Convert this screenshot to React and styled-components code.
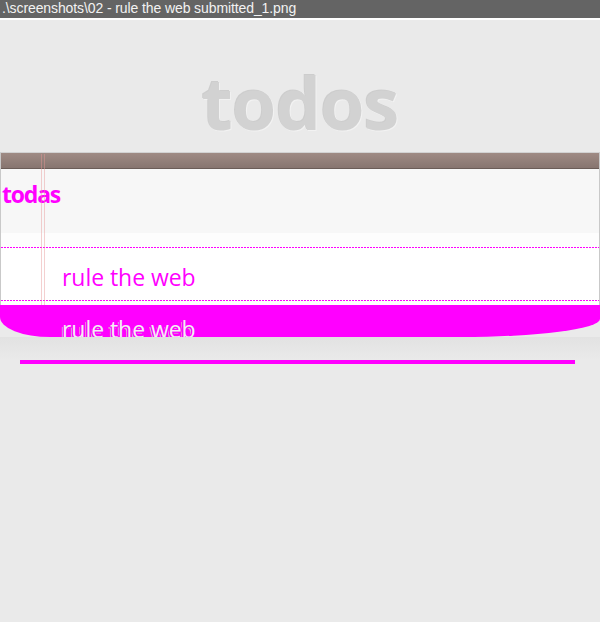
import React from "react";
import styled, { createGlobalStyle } from "styled-components";

const Global = createGlobalStyle`
  html, body { margin: 0; padding: 0; }
  body {
    background: #eaeaea;
    width: 600px;
    height: 622px;
    overflow: hidden;
    font-family: "Open Sans", "Liberation Sans", sans-serif;
  }
`;

const Page = styled.div`
  width: 600px;
  height: 622px;
  display: flex;
  flex-direction: column;
  background: #eaeaea;
`;

const TitleBar = styled.div`
  height: 18px;
  background: #646464;
  color: #f2f2f2;
  font-family: "Liberation Sans", Arial, sans-serif;
  font-size: 14px;
  line-height: 17px;
  letter-spacing: -0.1px;
  padding-left: 2px;
  border-bottom: 2px solid #ffffff;
  white-space: nowrap;
`;

const Header = styled.header`
  height: 132px;
  box-sizing: border-box;
  padding-top: 46px;
  display: flex;
  justify-content: center;
`;

const Logo = styled.h1`
  margin: 0;
  font-family: "Open Sans", "DejaVu Sans", sans-serif;
  font-weight: 700;
  font-size: 72px;
  line-height: 72px;
  height: 72px;
  letter-spacing: -1px;
  color: #d2d2d2;
  text-shadow: -1px -1px 0 rgba(0, 0, 0, 0.12), 1px 1px 0 rgba(255, 255, 255, 0.4);
`;

const Panel = styled.section`
  position: relative;
  border-left: 1px solid #c9c9c9;
  border-right: 1px solid #c9c9c9;
  border-top: 1px solid #d2d2d2;
  background: #ffffff;
`;

const Band = styled.div`
  height: 15px;
  background: linear-gradient(#9f8b84, #877570);
  border-bottom: 1px solid #6b5d58;
`;

const NewTodo = styled.div`
  height: 64px;
  box-sizing: border-box;
  background: #f7f7f7;
  padding: 14px 0 0 1px;
`;

const Placeholder = styled.div`
  font-family: "Open Sans", sans-serif;
  font-weight: 700;
  font-size: 23px;
  line-height: 23px;
  letter-spacing: -1.2px;
  color: #ff00ff;
`;

const Spacer = styled.div`
  height: 14px;
  background: #fdfdfd;
`;

const Dotted = styled.div`
  height: 1px;
  background: repeating-linear-gradient(to right, #ff00ff 0 2px, transparent 2px 3px);
`;

const Item = styled.div`
  height: ${(p) => p.$h}px;
  box-sizing: border-box;
  padding: ${(p) => (p.$pad ? "18px 0 0 61px" : "0")};
  background: #ffffff;
`;

const ItemText = styled.div`
  font-family: "Open Sans", sans-serif;
  font-size: 23px;
  line-height: 23px;
  color: #ff00ff;
  letter-spacing: -0.05px;
`;

const MarginLine = styled.div`
  position: absolute;
  top: 1px;
  bottom: 0;
  left: ${(p) => p.$x}px;
  width: 1px;
  background: rgba(230, 150, 150, 0.45);
  pointer-events: none;
`;

const Footer = styled.div`
  height: 32px;
  box-sizing: border-box;
  padding: 13px 0 0 62px;
  background: #ff00ff;
  border-radius: 0 0 140px 50px / 0 0 18px 20px;
`;

const GhostText = styled.div`
  font-family: "Open Sans", sans-serif;
  font-size: 23px;
  line-height: 23px;
  color: #f4eef4;
  letter-spacing: -0.05px;
  text-shadow:
    1px 0 0 #ff00ff, -1px 0 0 #ff00ff, 0 1px 0 #ff00ff, 0 -1px 0 #ff00ff,
    1px 1px 0 #ff00ff, -1px 1px 0 #ff00ff, 1px -1px 0 #ff00ff, -1px -1px 0 #ff00ff,
    -2px 2px 0 #c8c8c8;
`;

const Shade = styled.div`
  height: 23px;
  background: linear-gradient(#e2e2e2, #eaeaea);
`;

const Stripe = styled.div`
  height: 4px;
  margin: 0 25px 0 20px;
  background: #ff00ff;
`;

export default function App() {
  return (
    <Page>
      <Global />
      <TitleBar>.\screenshots\02 - rule the web submitted_1.png</TitleBar>
      <Header>
        <Logo>todos</Logo>
      </Header>
      <Panel>
        <Band />
        <NewTodo>
          <Placeholder>todas</Placeholder>
        </NewTodo>
        <Spacer />
        <Dotted />
        <Item $h={52} $pad>
          <ItemText>rule the web</ItemText>
        </Item>
        <Dotted />
        <Item $h={4} />
        <MarginLine $x={40} />
        <MarginLine $x={43} />
      </Panel>
      <Footer>
        <GhostText>rule the web</GhostText>
      </Footer>
      <Shade />
      <Stripe />
    </Page>
  );
}
